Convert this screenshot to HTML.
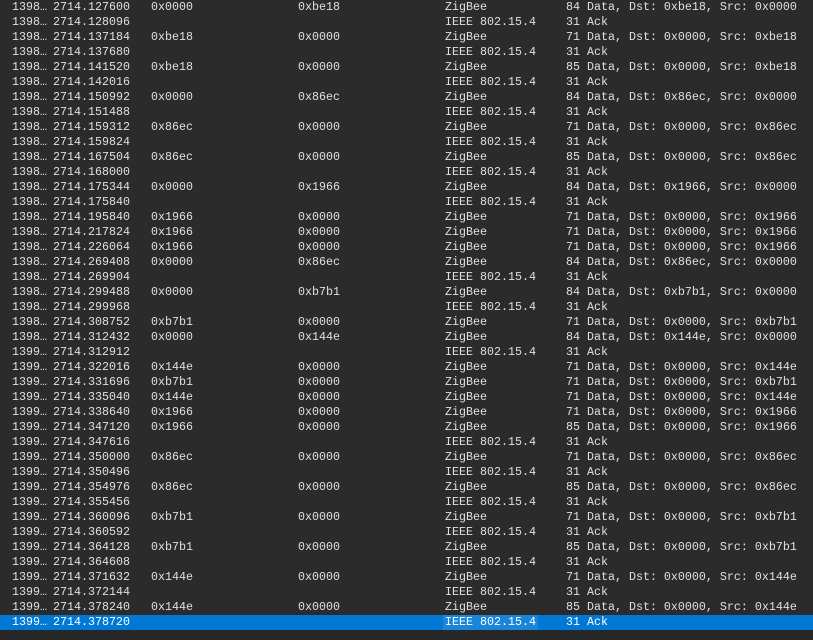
<!DOCTYPE html><html><head><style>
body{margin:0;background:#272727;width:813px;height:640px;overflow:hidden;font-family:"Liberation Mono",monospace;font-size:11.67px;color:#e0e0e0}
#t{background:#2b2b2b}
.r{height:15px;line-height:15px;position:relative;white-space:pre}
.r span{position:absolute;top:0}
.a{left:12px}.b{left:53px}.c{left:151px}.d{left:298px}.e{left:445px}.f{left:566px}
.sel{background:#0078d4;color:#fff}
.sel .e{background:#1a86d9;padding:0 2px;margin-left:-2px}
</style></head><body>
<div id="t"></div>
<script>
const rows=[
["1398…","2714.127600","0x0000","0xbe18","ZigBee","84 Data, Dst: 0xbe18, Src: 0x0000"],
["1398…","2714.128096","","","IEEE 802.15.4","31 Ack"],
["1398…","2714.137184","0xbe18","0x0000","ZigBee","71 Data, Dst: 0x0000, Src: 0xbe18"],
["1398…","2714.137680","","","IEEE 802.15.4","31 Ack"],
["1398…","2714.141520","0xbe18","0x0000","ZigBee","85 Data, Dst: 0x0000, Src: 0xbe18"],
["1398…","2714.142016","","","IEEE 802.15.4","31 Ack"],
["1398…","2714.150992","0x0000","0x86ec","ZigBee","84 Data, Dst: 0x86ec, Src: 0x0000"],
["1398…","2714.151488","","","IEEE 802.15.4","31 Ack"],
["1398…","2714.159312","0x86ec","0x0000","ZigBee","71 Data, Dst: 0x0000, Src: 0x86ec"],
["1398…","2714.159824","","","IEEE 802.15.4","31 Ack"],
["1398…","2714.167504","0x86ec","0x0000","ZigBee","85 Data, Dst: 0x0000, Src: 0x86ec"],
["1398…","2714.168000","","","IEEE 802.15.4","31 Ack"],
["1398…","2714.175344","0x0000","0x1966","ZigBee","84 Data, Dst: 0x1966, Src: 0x0000"],
["1398…","2714.175840","","","IEEE 802.15.4","31 Ack"],
["1398…","2714.195840","0x1966","0x0000","ZigBee","71 Data, Dst: 0x0000, Src: 0x1966"],
["1398…","2714.217824","0x1966","0x0000","ZigBee","71 Data, Dst: 0x0000, Src: 0x1966"],
["1398…","2714.226064","0x1966","0x0000","ZigBee","71 Data, Dst: 0x0000, Src: 0x1966"],
["1398…","2714.269408","0x0000","0x86ec","ZigBee","84 Data, Dst: 0x86ec, Src: 0x0000"],
["1398…","2714.269904","","","IEEE 802.15.4","31 Ack"],
["1398…","2714.299488","0x0000","0xb7b1","ZigBee","84 Data, Dst: 0xb7b1, Src: 0x0000"],
["1398…","2714.299968","","","IEEE 802.15.4","31 Ack"],
["1398…","2714.308752","0xb7b1","0x0000","ZigBee","71 Data, Dst: 0x0000, Src: 0xb7b1"],
["1398…","2714.312432","0x0000","0x144e","ZigBee","84 Data, Dst: 0x144e, Src: 0x0000"],
["1399…","2714.312912","","","IEEE 802.15.4","31 Ack"],
["1399…","2714.322016","0x144e","0x0000","ZigBee","71 Data, Dst: 0x0000, Src: 0x144e"],
["1399…","2714.331696","0xb7b1","0x0000","ZigBee","71 Data, Dst: 0x0000, Src: 0xb7b1"],
["1399…","2714.335040","0x144e","0x0000","ZigBee","71 Data, Dst: 0x0000, Src: 0x144e"],
["1399…","2714.338640","0x1966","0x0000","ZigBee","71 Data, Dst: 0x0000, Src: 0x1966"],
["1399…","2714.347120","0x1966","0x0000","ZigBee","85 Data, Dst: 0x0000, Src: 0x1966"],
["1399…","2714.347616","","","IEEE 802.15.4","31 Ack"],
["1399…","2714.350000","0x86ec","0x0000","ZigBee","71 Data, Dst: 0x0000, Src: 0x86ec"],
["1399…","2714.350496","","","IEEE 802.15.4","31 Ack"],
["1399…","2714.354976","0x86ec","0x0000","ZigBee","85 Data, Dst: 0x0000, Src: 0x86ec"],
["1399…","2714.355456","","","IEEE 802.15.4","31 Ack"],
["1399…","2714.360096","0xb7b1","0x0000","ZigBee","71 Data, Dst: 0x0000, Src: 0xb7b1"],
["1399…","2714.360592","","","IEEE 802.15.4","31 Ack"],
["1399…","2714.364128","0xb7b1","0x0000","ZigBee","85 Data, Dst: 0x0000, Src: 0xb7b1"],
["1399…","2714.364608","","","IEEE 802.15.4","31 Ack"],
["1399…","2714.371632","0x144e","0x0000","ZigBee","71 Data, Dst: 0x0000, Src: 0x144e"],
["1399…","2714.372144","","","IEEE 802.15.4","31 Ack"],
["1399…","2714.378240","0x144e","0x0000","ZigBee","85 Data, Dst: 0x0000, Src: 0x144e"],
["1399…","2714.378720","","","IEEE 802.15.4","31 Ack"]];
const cls="abcdef";let h="";
rows.forEach((r,i)=>{h+='<div class="r'+(i==rows.length-1?' sel':'')+'">'+r.map((v,j)=>'<span class="'+cls[j]+'">'+v+'</span>').join('')+'</div>';});
document.getElementById('t').innerHTML=h;
</script>
</body></html>
